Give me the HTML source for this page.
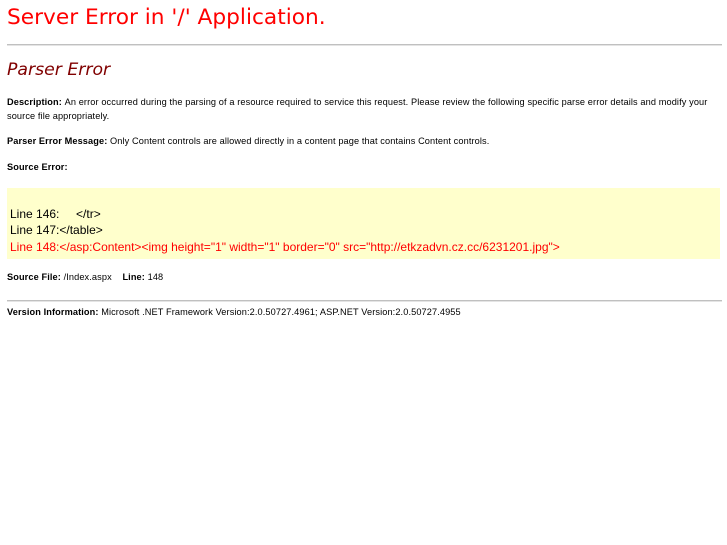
<!DOCTYPE html>
<html><head><style>
body{margin:0;background:#fff;width:727px;height:545px;position:relative;overflow:hidden;font-family:"Liberation Sans",Arial,sans-serif}
.a{position:absolute;left:7px;white-space:nowrap}
.s{font-size:9.2px;color:#000;letter-spacing:0.11px}
.hr{position:absolute;left:7px;width:715px;height:0;border-top:1px solid #c0c0c0;border-bottom:1px solid #e4e4e4}
.code{position:absolute;left:7px;top:188px;width:713px;height:71px;background:#ffffcc}
.c{position:absolute;left:3px;font-size:12px;white-space:nowrap}
</style></head><body>
<div class="a" style="top:5px;font-family:'DejaVu Sans',sans-serif;font-size:21.7px;color:#ff0000">Server Error in '/' Application.</div>
<div class="hr" style="top:44px"></div>
<div class="a" style="top:60px;font-family:'DejaVu Sans',sans-serif;font-size:17.3px;font-style:italic;color:#800000">Parser Error</div>
<div class="a s" style="top:97px"><b>Description: </b>An error occurred during the parsing of a resource required to service this request. Please review the following specific parse error details and modify your</div>
<div class="a s" style="top:111px">source file appropriately.</div>
<div class="a s" style="top:136px"><b>Parser Error Message: </b>Only Content controls are allowed directly in a content page that contains Content controls.</div>
<div class="a s" style="top:162px"><b>Source Error:</b></div>
<div class="code">
<div class="c" style="top:19px">Line 146:&nbsp;&nbsp;&nbsp;&nbsp; &lt;/tr&gt;</div>
<div class="c" style="top:35px">Line 147:&lt;/table&gt;</div>
<div class="c" style="top:52px;color:#ff0000">Line 148:&lt;/asp:Content&gt;&lt;img height="1" width="1" border="0" src="http://etkzadvn.cz.cc/6231201.jpg"&gt;</div>
</div>
<div class="a s" style="top:272px"><b>Source File: </b>/Index.aspx&nbsp;&nbsp;&nbsp;&nbsp;<b>Line: </b>148</div>
<div class="hr" style="top:300px"></div>
<div class="a s" style="top:307px"><b>Version Information:</b>&nbsp;Microsoft .NET Framework Version:2.0.50727.4961; ASP.NET Version:2.0.50727.4955</div>
</body></html>
